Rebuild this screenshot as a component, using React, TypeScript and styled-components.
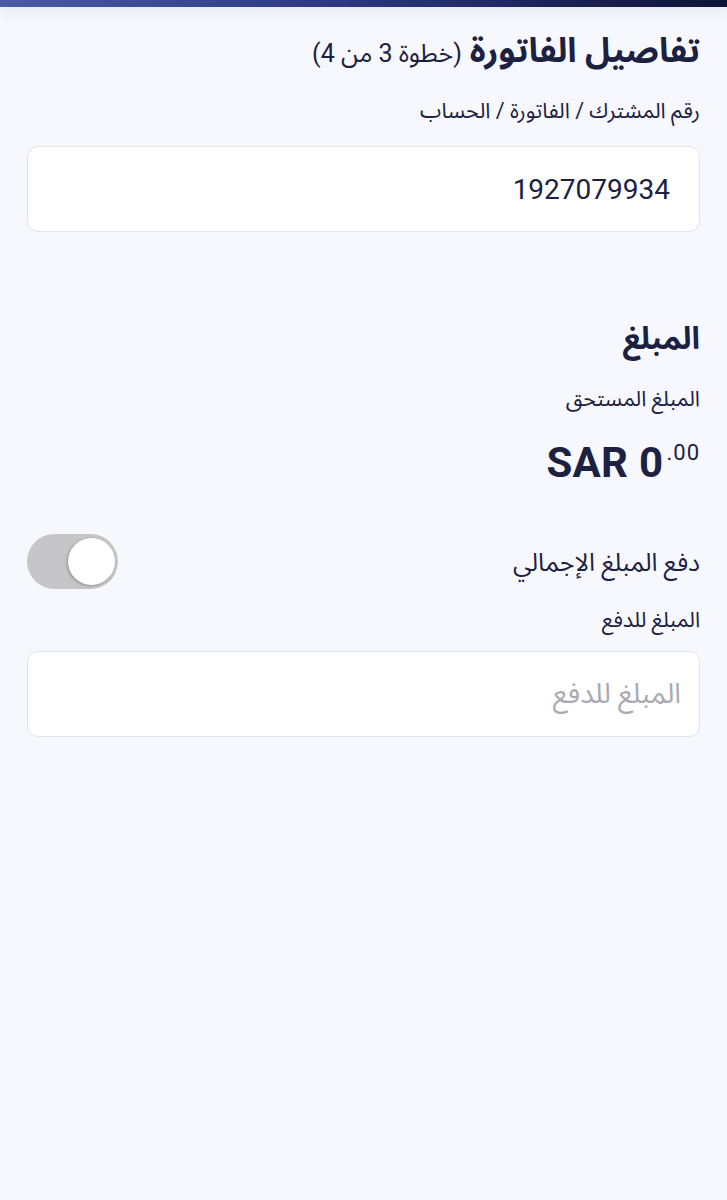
import React, { useState } from 'react';
import styled, { createGlobalStyle } from 'styled-components';

const GlobalStyle = createGlobalStyle`
  html, body {
    margin: 0;
    padding: 0;
    background: #f7f8fd;
  }
  body {
    font-family: Roboto, "Noto Sans Arabic", "DejaVu Sans", sans-serif;
    color: #1c2142;
  }
`;

const Page = styled.div`
  min-height: 1200px;
  background: #f7f8fd;
  direction: rtl;
`;

const TopBar = styled.div`
  height: 7px;
  background: linear-gradient(90deg, #4b5aa6 0%, #2d3a82 45%, #0c1238 100%);
  box-shadow: 0 4px 14px rgba(30, 34, 70, 0.12);
`;

const Content = styled.div`
  padding: 20px 27px 0;
  display: flex;
  flex-direction: column;
`;

const Title = styled.h1`
  margin: 0;
  font-size: 34px;
  font-weight: 700;
  line-height: 46px;
  color: #1c2142;
`;

const Step = styled.span`
  font-size: 25px;
  font-weight: 400;
  margin-right: 8px;
`;

const Label = styled.div<{ gap?: number }>`
  font-size: 21.5px;
  line-height: 28px;
  color: #1c2142;
  margin-top: ${props => props.gap ?? 0}px;
`;

const Field = styled.div<{ gap?: number }>`
  margin-top: ${props => props.gap ?? 0}px;
  height: 86px;
  box-sizing: border-box;
  background: #ffffff;
  border: 1.5px solid #e3e4ea;
  border-radius: 11px;
  display: flex;
  align-items: center;
  padding: 0 29px;
`;

const FieldValue = styled.span`
  font-family: Roboto, sans-serif;
  font-size: 28px;
  color: #1c2142;
  direction: ltr;
`;

const FieldInput = styled.input`
  flex: 1;
  min-width: 0;
  border: none;
  outline: none;
  background: transparent;
  font-family: "Noto Sans Arabic", "DejaVu Sans", sans-serif;
  font-size: 28px;
  color: #1c2142;
  direction: rtl;
  text-align: right;
  padding: 0;
  margin-right: -11px;

  &::placeholder {
    color: #a9aab2;
  }
`;

const SectionTitle = styled.h2`
  margin: 87px 0 0;
  font-size: 31px;
  font-weight: 700;
  line-height: 40px;
  color: #1c2142;
`;

const Amount = styled.div`
  margin-top: 25px;
  direction: ltr;
  align-self: flex-start;
  font-family: Roboto, sans-serif;
  font-weight: 700;
  font-size: 42px;
  line-height: 50px;
  color: #1c2142;
  letter-spacing: 0.3px;
`;

const Cents = styled.sup`
  font-size: 22px;
  font-weight: 400;
  vertical-align: 17px;
  line-height: 0;
  margin-left: 3px;
  letter-spacing: 1px;
`;

const ToggleRow = styled.div`
  margin-top: 45px;
  display: flex;
  align-items: center;
  justify-content: space-between;
`;

const ToggleLabel = styled.span`
  font-size: 25px;
  color: #1c2142;
  margin-top: 4px;
`;

const Track = styled.button<{ on: boolean }>`
  width: 91px;
  height: 55px;
  border-radius: 28px;
  border: none;
  background: ${props => (props.on ? '#3a4a9a' : '#c6c6c8')};
  display: flex;
  align-items: center;
  justify-content: flex-start;
  padding: 0 3px;
  box-sizing: border-box;
  cursor: pointer;
`;

const Knob = styled.span`
  width: 47px;
  height: 47px;
  border-radius: 50%;
  background: #ffffff;
  box-shadow: -1px 1px 3px rgba(0, 0, 0, 0.28);
`;

export default function App() {
  const [payAll, setPayAll] = useState(false);
  const [amount, setAmount] = useState('');

  return (
    <Page>
      <GlobalStyle />
      <TopBar />
      <Content>
        <Title>
          تفاصيل الفاتورة<Step>(خطوة 3 من 4)</Step>
        </Title>
        <Label gap={20}>رقم المشترك / الفاتورة / الحساب</Label>
        <Field gap={21}>
          <FieldValue>1927079934</FieldValue>
        </Field>

        <SectionTitle>المبلغ</SectionTitle>
        <Label gap={26}>المبلغ المستحق</Label>
        <Amount>
          SAR 0<Cents>.00</Cents>
        </Amount>

        <ToggleRow>
          <ToggleLabel>دفع المبلغ الإجمالي</ToggleLabel>
          <Track on={payAll} onClick={() => setPayAll(!payAll)}>
            <Knob />
          </Track>
        </ToggleRow>
        <Label gap={17}>المبلغ للدفع</Label>
        <Field gap={17}>
          <FieldInput
            placeholder="المبلغ للدفع"
            value={amount}
            onChange={e => setAmount(e.target.value)}
          />
        </Field>
      </Content>
    </Page>
  );
}
